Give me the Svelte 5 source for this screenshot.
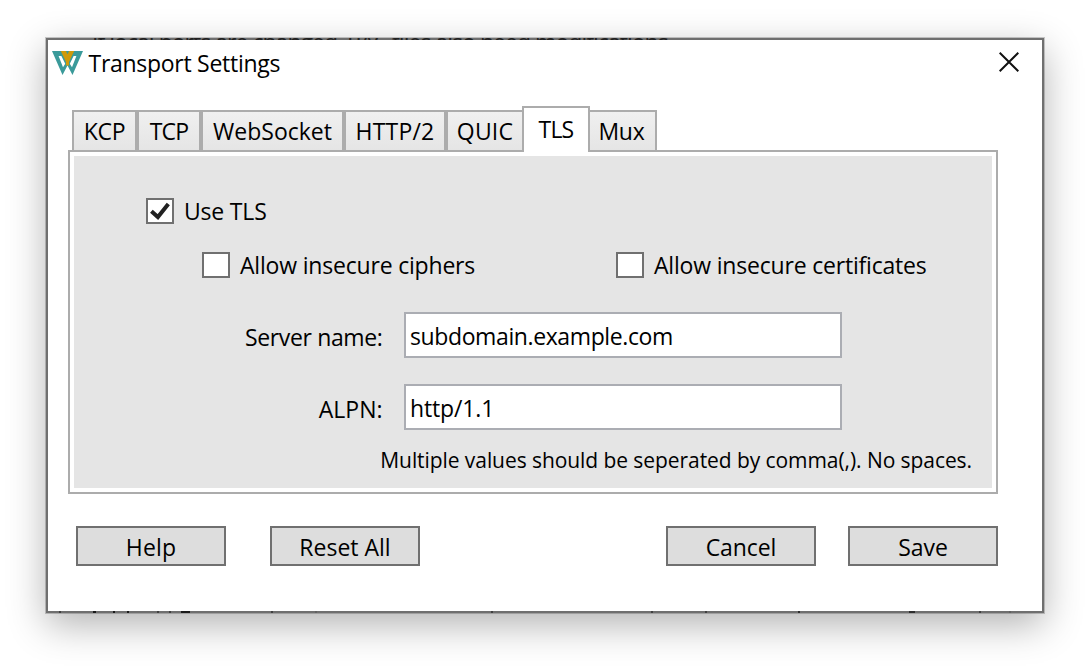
<script>
  const tabs = [
    { label: 'KCP', width: 65, spacing: -0.3 },
    { label: 'TCP', width: 64, spacing: -0.9 },
    { label: 'WebSocket', width: 143, spacing: 0 },
    { label: 'HTTP/2', width: 102, spacing: 0.2 },
    { label: 'QUIC', width: 78, spacing: 0.2 },
    { label: 'TLS', width: 68, spacing: -0.8 },
    { label: 'Mux', width: 67, spacing: -0.2 },
  ];
  // Remains of the window behind, visible through the bottom frame: [x, width, opacity]
  const specks = [
    [11, 2, 0.5], [45, 3, 0.9], [65, 2, 0.9], [79, 2, 0.9], [109, 2, 0.5], [121, 2, 0.5],
    [133, 9, 0.9], [223, 2, 0.5], [267, 2, 0.15], [443, 2, 0.5], [603, 2, 0.5],
    [657, 2, 0.5], [750, 2, 0.7], [861, 6, 0.7], [931, 2, 0.5], [961, 2, 0.15],
  ];
  let active = $state('TLS');
  let useTls = $state(true);
  let ciphers = $state(false);
  let certificates = $state(false);
  let serverName = $state('subdomain.example.com');
  let alpn = $state('http/1.1');
</script>

{#snippet check(on)}
  <span class="box">
    {#if on}
      <svg viewBox="0 0 24 22" width="24" height="22"><path d="M3.4 11.2 9.9 17 20.3 4" fill="none" stroke="#212121" stroke-width="4" /></svg>
    {/if}
  </span>
{/snippet}

<div class="desktop">
<div class="window">
  <div class="behind top" aria-hidden="true"><span>If local ports are changed, PAC files also need modifications.</span></div>
  <svg class="behind bottom" width="994" height="2" aria-hidden="true">
    {#each specks as [x, w, o]}<rect {x} y="0" width={w} height="2" fill="#111" opacity={o} />{/each}
  </svg>

  <header>
    <svg class="logo" viewBox="0 0 31 24" width="31" height="24">
      <path d="M0 0H31L20.5 24 15.5 14.6 10.5 24Z" fill="#3a9a9a" />
      <path d="M6.6 5H9.4L13.2 12.8 11 16.2Z M24.4 5H21.6L17.8 12.8 20 16.2Z" fill="#fff" />
      <path d="M8.8 0H13.9L15.5 3.2 17.1 0H22.2L17 11V14.5H14V11Z" fill="#cf9a0a" />
    </svg>
    <h1>Transport Settings</h1>
    <button class="close" aria-label="Close">
      <svg viewBox="0 0 20 20" width="20" height="20"><path d="M.7.7 19.3 19.3M19.3.7.7 19.3" stroke="#111" stroke-width="2" /></svg>
    </button>
  </header>

  <nav>
    {#each tabs as tab}
      <button
        class="tab"
        class:active={active === tab.label}
        style="width:{tab.width}px;letter-spacing:{tab.spacing}px"
        onclick={() => (active = tab.label)}>{tab.label}</button>
    {/each}
  </nav>

  <main>
    <div class="content">
      <label class="use"><input type="checkbox" bind:checked={useTls} />{@render check(useTls)}<span class="t-use">Use TLS</span></label>
      <div class="options">
        <label><input type="checkbox" bind:checked={ciphers} />{@render check(ciphers)}<span>Allow insecure ciphers</span></label>
        <label><input type="checkbox" bind:checked={certificates} />{@render check(certificates)}<span>Allow insecure certificates</span></label>
      </div>
      <div class="row">
        <label class="name server" for="server">Server name:</label>
        <input id="server" class="field domain" bind:value={serverName} />
      </div>
      <div class="row">
        <label class="name" for="alpn">ALPN:</label>
        <input id="alpn" class="field protocol" bind:value={alpn} />
      </div>
      <p>Multiple values should be seperated by comma(,). No spaces.</p>
    </div>
  </main>

  <footer>
    <button class="help">Help</button>
    <button class="reset">Reset All</button>
    <button class="cancel">Cancel</button>
    <button class="save">Save</button>
  </footer>
</div>
</div>

<style>
  :global(body) { background: #fff; }
  .desktop { box-sizing: border-box; height: 668px; padding: 38px 46px 0; overflow: hidden; }
  .window, button, input {
    font-family: "Open Sans", "Noto Sans", sans-serif;
    font-size: 23px;
    line-height: 32px;
    color: #000;
  }
  .window {
    position: relative;
    display: flex;
    flex-direction: column;
    box-sizing: border-box;
    width: 998px;
    height: 575px;
    border: 2px solid #6f6f6f;
    background: #fff;
    box-shadow: 0 0 0 1px rgba(0, 0, 0, .2), 0 12px 36px rgba(0, 0, 0, .3);
  }
  button { box-sizing: border-box; padding: 0; margin: 0; }
  svg { display: block; }

  .behind { position: absolute; height: 2px; overflow: hidden; }
  .top { top: -2px; left: 44px; width: 580px; }
  .top span { display: block; margin-top: -12px; white-space: nowrap; letter-spacing: -.97px; color: #222; }
  .bottom { left: 0; bottom: -2px; }

  header { display: flex; height: 70px; padding: 7px 21px 0 4px; box-sizing: border-box; }
  .logo { margin-top: 4px; }
  h1 { flex: 1; margin: 0 0 0 5.5px; font-size: 23px; font-weight: 400; letter-spacing: -.28px; }
  .close { width: 22px; height: 22px; margin-top: 4px; border: 0; background: none; }

  nav { display: flex; align-items: flex-end; height: 42px; padding-left: 24px; position: relative; z-index: 1; }
  .tab {
    flex: none;
    height: 42px;
    border: 2px solid #acacac;
    background: linear-gradient(#f0f0f0, #e5e5e5);
  }
  .tab.active { height: 46px; margin-left: -2px; background: #fff; border-bottom: 0; padding: 0 0 3px; }
  .tab.active + .tab { border-left: 0; padding-right: 2px; }

  main { box-sizing: border-box; width: 930px; height: 344px; margin: -2px 0 0 20px; border: 2px solid #acacac; padding: 4px; }
  .content { box-sizing: border-box; height: 332px; background: #e5e5e5; padding: 39px 20px 0 0; }

  label { display: flex; align-items: center; height: 32px; white-space: nowrap; }
  label input { position: absolute; opacity: 0; pointer-events: none; }
  label span:last-child { margin: 0 0 0 10px; letter-spacing: -.19px; }
  label .t-use { letter-spacing: -.1px; }
  .box { flex: none; width: 24px; height: 22px; border: 2px solid #707070; background: #fff; }
  .use { margin-left: 72px; }
  .options { display: grid; grid-template-columns: 414px 1fr; margin: 22px 0 31px 128px; }

  .row { display: flex; align-items: center; height: 46px; margin-bottom: 26px; }
  .name { width: 308.5px; margin-right: 21.5px; justify-content: flex-end; padding-top: 3px; }
  .server { letter-spacing: -.36px; }
  .field { box-sizing: border-box; width: 438px; height: 46px; border: 2px solid #abadb3; padding: 3px 4px 1px; background: #fff; outline: 0; }
  .domain { letter-spacing: -.39px; }
  .protocol { letter-spacing: -.15px; }
  p { margin: -12px 0 0; text-align: right; font-size: 21px; letter-spacing: -.07px; white-space: nowrap; }

  footer { display: flex; margin: 32px 44px 0 28px; }
  footer button { width: 150px; height: 40px; border: 2px solid #707070; background: #ddd; padding-top: 1px; }
  .help { letter-spacing: .2px; }
  .reset { margin-left: 44px; }
  .cancel { margin-left: auto; letter-spacing: -.1px; }
  .save { margin-left: 32px; letter-spacing: -.1px; }
</style>
